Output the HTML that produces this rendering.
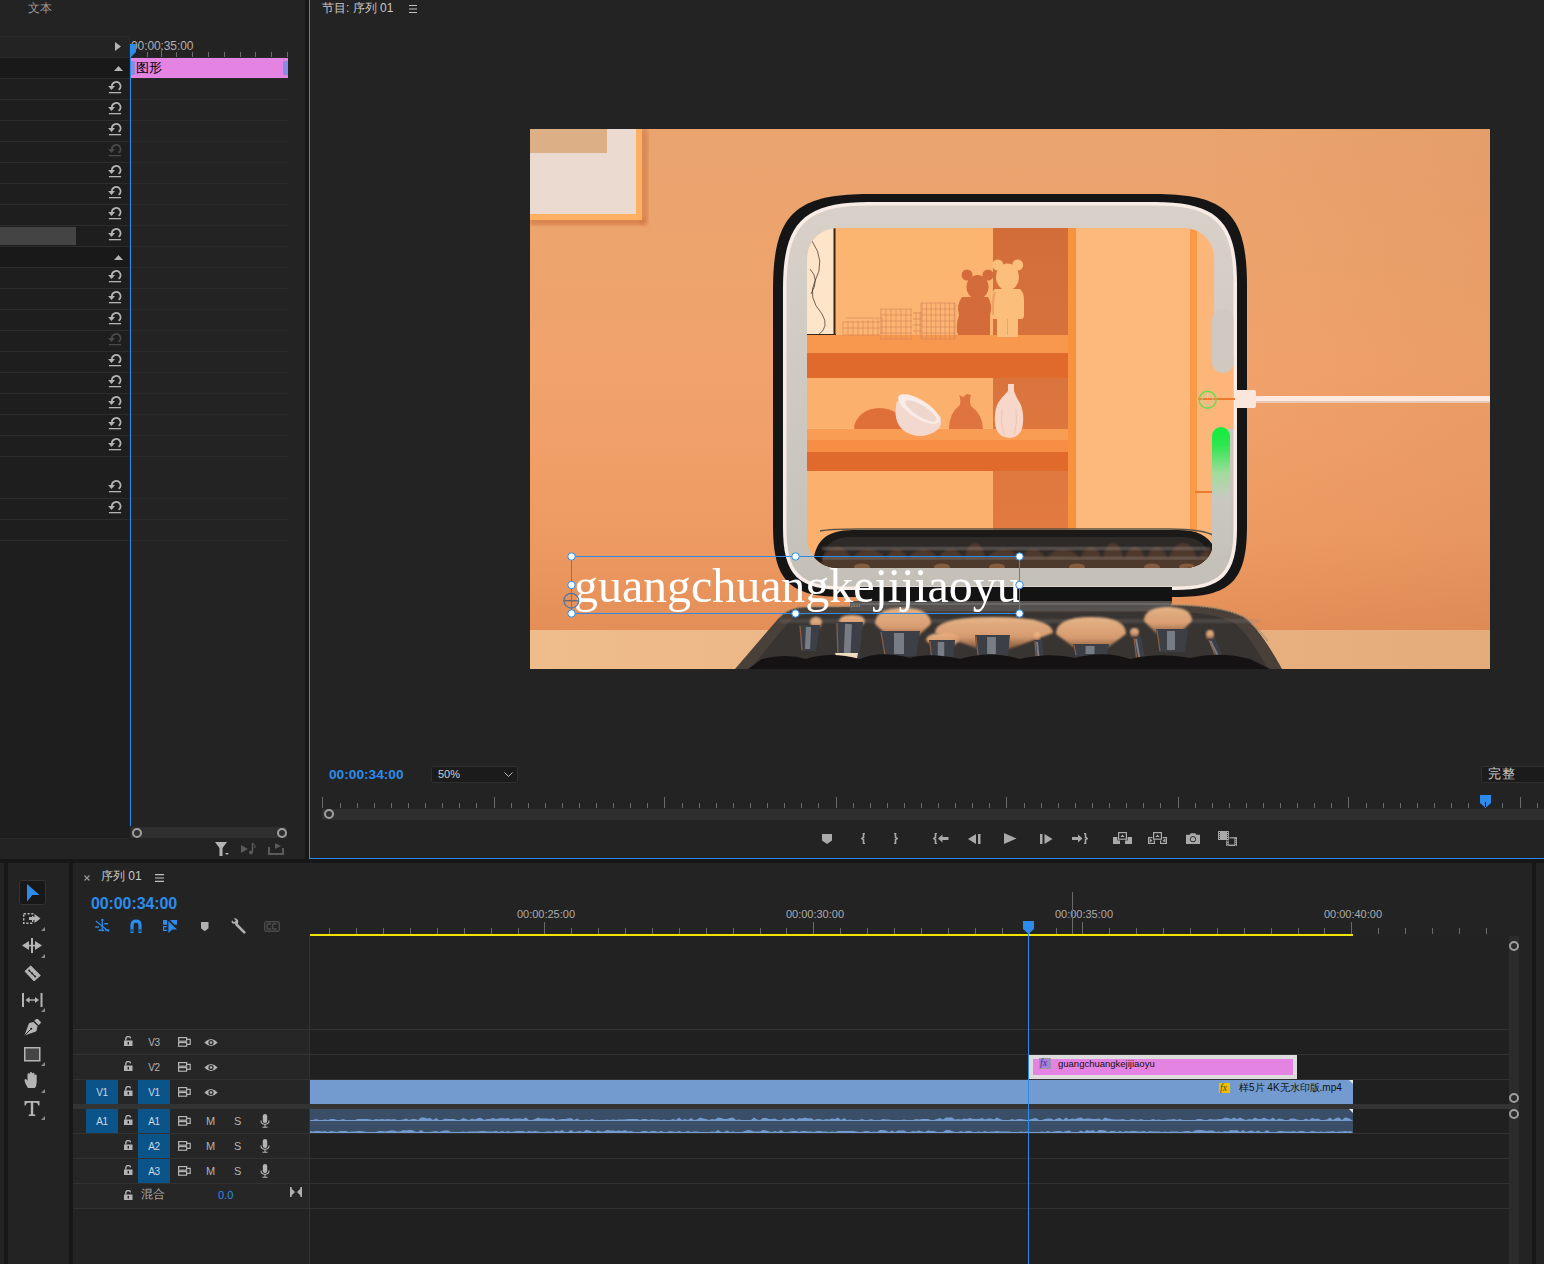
<!DOCTYPE html>
<html><head><meta charset="utf-8">
<style>
*{margin:0;padding:0;box-sizing:border-box}
html,body{width:1544px;height:1264px;overflow:hidden;background:#171717;font-family:"Liberation Sans",sans-serif;color:#b4b4b4}
.a{position:absolute}
.t{position:absolute;white-space:nowrap;line-height:1}
.hl{position:absolute;height:1px;background:#2c2c2c}
.vl{position:absolute;width:1px}
</style></head><body>

<div class="a" style="left:0;top:0;width:305px;height:859px;background:#232323"></div>
<div class="t" style="left:28px;top:2px;font-size:12px;color:#9a9a9a">文本</div>
<div class="a" style="left:0;top:57px;width:129px;height:781px;background:#1e1e1e"></div>
<div class="a" style="left:0;top:57px;width:129px;height:21px;background:#191919"></div>
<div class="a" style="left:0;top:246px;width:129px;height:21px;background:#191919"></div>
<div class="a" style="left:0;top:227px;width:76px;height:18px;background:#444"></div>
<div class="hl" style="left:0;top:36px;width:129px"></div>
<div class="hl" style="left:0;top:57px;width:129px"></div>
<div class="hl" style="left:131px;top:57px;width:157px;background:#2a2a2a"></div>
<div class="hl" style="left:0;top:78px;width:129px"></div>
<div class="hl" style="left:131px;top:78px;width:157px;background:#2a2a2a"></div>
<div class="hl" style="left:0;top:99px;width:129px"></div>
<div class="hl" style="left:131px;top:99px;width:157px;background:#2a2a2a"></div>
<div class="hl" style="left:0;top:120px;width:129px"></div>
<div class="hl" style="left:131px;top:120px;width:157px;background:#2a2a2a"></div>
<div class="hl" style="left:0;top:141px;width:129px"></div>
<div class="hl" style="left:131px;top:141px;width:157px;background:#2a2a2a"></div>
<div class="hl" style="left:0;top:162px;width:129px"></div>
<div class="hl" style="left:131px;top:162px;width:157px;background:#2a2a2a"></div>
<div class="hl" style="left:0;top:183px;width:129px"></div>
<div class="hl" style="left:131px;top:183px;width:157px;background:#2a2a2a"></div>
<div class="hl" style="left:0;top:204px;width:129px"></div>
<div class="hl" style="left:131px;top:204px;width:157px;background:#2a2a2a"></div>
<div class="hl" style="left:0;top:225px;width:129px"></div>
<div class="hl" style="left:131px;top:225px;width:157px;background:#2a2a2a"></div>
<div class="hl" style="left:0;top:246px;width:129px"></div>
<div class="hl" style="left:131px;top:246px;width:157px;background:#2a2a2a"></div>
<div class="hl" style="left:0;top:267px;width:129px"></div>
<div class="hl" style="left:131px;top:267px;width:157px;background:#2a2a2a"></div>
<div class="hl" style="left:0;top:288px;width:129px"></div>
<div class="hl" style="left:131px;top:288px;width:157px;background:#2a2a2a"></div>
<div class="hl" style="left:0;top:309px;width:129px"></div>
<div class="hl" style="left:131px;top:309px;width:157px;background:#2a2a2a"></div>
<div class="hl" style="left:0;top:330px;width:129px"></div>
<div class="hl" style="left:131px;top:330px;width:157px;background:#2a2a2a"></div>
<div class="hl" style="left:0;top:351px;width:129px"></div>
<div class="hl" style="left:131px;top:351px;width:157px;background:#2a2a2a"></div>
<div class="hl" style="left:0;top:372px;width:129px"></div>
<div class="hl" style="left:131px;top:372px;width:157px;background:#2a2a2a"></div>
<div class="hl" style="left:0;top:393px;width:129px"></div>
<div class="hl" style="left:131px;top:393px;width:157px;background:#2a2a2a"></div>
<div class="hl" style="left:0;top:414px;width:129px"></div>
<div class="hl" style="left:131px;top:414px;width:157px;background:#2a2a2a"></div>
<div class="hl" style="left:0;top:435px;width:129px"></div>
<div class="hl" style="left:131px;top:435px;width:157px;background:#2a2a2a"></div>
<div class="hl" style="left:0;top:456px;width:129px"></div>
<div class="hl" style="left:131px;top:456px;width:157px;background:#2a2a2a"></div>
<div class="hl" style="left:0;top:498px;width:129px"></div>
<div class="hl" style="left:131px;top:498px;width:157px;background:#2a2a2a"></div>
<div class="hl" style="left:0;top:519px;width:129px"></div>
<div class="hl" style="left:131px;top:519px;width:157px;background:#2a2a2a"></div>
<div class="hl" style="left:0;top:540px;width:129px"></div>
<div class="hl" style="left:131px;top:540px;width:157px;background:#2a2a2a"></div>
<svg class="a" style="left:108px;top:81px" width="14" height="13" viewBox="0 0 14 13"><path d="M3.9 5.6A4.3 4.3 0 1 1 10.6 8.8" stroke="#b4b4b4" stroke-width="1.7" fill="none"/><path d="M0.1 5.1H7L3.5 9Z" fill="#b4b4b4"/><rect x="0.9" y="11" width="12.2" height="1.3" fill="#b4b4b4"/></svg>
<svg class="a" style="left:108px;top:102px" width="14" height="13" viewBox="0 0 14 13"><path d="M3.9 5.6A4.3 4.3 0 1 1 10.6 8.8" stroke="#b4b4b4" stroke-width="1.7" fill="none"/><path d="M0.1 5.1H7L3.5 9Z" fill="#b4b4b4"/><rect x="0.9" y="11" width="12.2" height="1.3" fill="#b4b4b4"/></svg>
<svg class="a" style="left:108px;top:123px" width="14" height="13" viewBox="0 0 14 13"><path d="M3.9 5.6A4.3 4.3 0 1 1 10.6 8.8" stroke="#b4b4b4" stroke-width="1.7" fill="none"/><path d="M0.1 5.1H7L3.5 9Z" fill="#b4b4b4"/><rect x="0.9" y="11" width="12.2" height="1.3" fill="#b4b4b4"/></svg>
<svg class="a" style="left:108px;top:144px" width="14" height="13" viewBox="0 0 14 13"><path d="M3.9 5.6A4.3 4.3 0 1 1 10.6 8.8" stroke="#4a4a4a" stroke-width="1.7" fill="none"/><path d="M0.1 5.1H7L3.5 9Z" fill="#4a4a4a"/><rect x="0.9" y="11" width="12.2" height="1.3" fill="#4a4a4a"/></svg>
<svg class="a" style="left:108px;top:165px" width="14" height="13" viewBox="0 0 14 13"><path d="M3.9 5.6A4.3 4.3 0 1 1 10.6 8.8" stroke="#b4b4b4" stroke-width="1.7" fill="none"/><path d="M0.1 5.1H7L3.5 9Z" fill="#b4b4b4"/><rect x="0.9" y="11" width="12.2" height="1.3" fill="#b4b4b4"/></svg>
<svg class="a" style="left:108px;top:186px" width="14" height="13" viewBox="0 0 14 13"><path d="M3.9 5.6A4.3 4.3 0 1 1 10.6 8.8" stroke="#b4b4b4" stroke-width="1.7" fill="none"/><path d="M0.1 5.1H7L3.5 9Z" fill="#b4b4b4"/><rect x="0.9" y="11" width="12.2" height="1.3" fill="#b4b4b4"/></svg>
<svg class="a" style="left:108px;top:207px" width="14" height="13" viewBox="0 0 14 13"><path d="M3.9 5.6A4.3 4.3 0 1 1 10.6 8.8" stroke="#b4b4b4" stroke-width="1.7" fill="none"/><path d="M0.1 5.1H7L3.5 9Z" fill="#b4b4b4"/><rect x="0.9" y="11" width="12.2" height="1.3" fill="#b4b4b4"/></svg>
<svg class="a" style="left:108px;top:228px" width="14" height="13" viewBox="0 0 14 13"><path d="M3.9 5.6A4.3 4.3 0 1 1 10.6 8.8" stroke="#b4b4b4" stroke-width="1.7" fill="none"/><path d="M0.1 5.1H7L3.5 9Z" fill="#b4b4b4"/><rect x="0.9" y="11" width="12.2" height="1.3" fill="#b4b4b4"/></svg>
<svg class="a" style="left:108px;top:270px" width="14" height="13" viewBox="0 0 14 13"><path d="M3.9 5.6A4.3 4.3 0 1 1 10.6 8.8" stroke="#b4b4b4" stroke-width="1.7" fill="none"/><path d="M0.1 5.1H7L3.5 9Z" fill="#b4b4b4"/><rect x="0.9" y="11" width="12.2" height="1.3" fill="#b4b4b4"/></svg>
<svg class="a" style="left:108px;top:291px" width="14" height="13" viewBox="0 0 14 13"><path d="M3.9 5.6A4.3 4.3 0 1 1 10.6 8.8" stroke="#b4b4b4" stroke-width="1.7" fill="none"/><path d="M0.1 5.1H7L3.5 9Z" fill="#b4b4b4"/><rect x="0.9" y="11" width="12.2" height="1.3" fill="#b4b4b4"/></svg>
<svg class="a" style="left:108px;top:312px" width="14" height="13" viewBox="0 0 14 13"><path d="M3.9 5.6A4.3 4.3 0 1 1 10.6 8.8" stroke="#b4b4b4" stroke-width="1.7" fill="none"/><path d="M0.1 5.1H7L3.5 9Z" fill="#b4b4b4"/><rect x="0.9" y="11" width="12.2" height="1.3" fill="#b4b4b4"/></svg>
<svg class="a" style="left:108px;top:333px" width="14" height="13" viewBox="0 0 14 13"><path d="M3.9 5.6A4.3 4.3 0 1 1 10.6 8.8" stroke="#4a4a4a" stroke-width="1.7" fill="none"/><path d="M0.1 5.1H7L3.5 9Z" fill="#4a4a4a"/><rect x="0.9" y="11" width="12.2" height="1.3" fill="#4a4a4a"/></svg>
<svg class="a" style="left:108px;top:354px" width="14" height="13" viewBox="0 0 14 13"><path d="M3.9 5.6A4.3 4.3 0 1 1 10.6 8.8" stroke="#b4b4b4" stroke-width="1.7" fill="none"/><path d="M0.1 5.1H7L3.5 9Z" fill="#b4b4b4"/><rect x="0.9" y="11" width="12.2" height="1.3" fill="#b4b4b4"/></svg>
<svg class="a" style="left:108px;top:375px" width="14" height="13" viewBox="0 0 14 13"><path d="M3.9 5.6A4.3 4.3 0 1 1 10.6 8.8" stroke="#b4b4b4" stroke-width="1.7" fill="none"/><path d="M0.1 5.1H7L3.5 9Z" fill="#b4b4b4"/><rect x="0.9" y="11" width="12.2" height="1.3" fill="#b4b4b4"/></svg>
<svg class="a" style="left:108px;top:396px" width="14" height="13" viewBox="0 0 14 13"><path d="M3.9 5.6A4.3 4.3 0 1 1 10.6 8.8" stroke="#b4b4b4" stroke-width="1.7" fill="none"/><path d="M0.1 5.1H7L3.5 9Z" fill="#b4b4b4"/><rect x="0.9" y="11" width="12.2" height="1.3" fill="#b4b4b4"/></svg>
<svg class="a" style="left:108px;top:417px" width="14" height="13" viewBox="0 0 14 13"><path d="M3.9 5.6A4.3 4.3 0 1 1 10.6 8.8" stroke="#b4b4b4" stroke-width="1.7" fill="none"/><path d="M0.1 5.1H7L3.5 9Z" fill="#b4b4b4"/><rect x="0.9" y="11" width="12.2" height="1.3" fill="#b4b4b4"/></svg>
<svg class="a" style="left:108px;top:438px" width="14" height="13" viewBox="0 0 14 13"><path d="M3.9 5.6A4.3 4.3 0 1 1 10.6 8.8" stroke="#b4b4b4" stroke-width="1.7" fill="none"/><path d="M0.1 5.1H7L3.5 9Z" fill="#b4b4b4"/><rect x="0.9" y="11" width="12.2" height="1.3" fill="#b4b4b4"/></svg>
<svg class="a" style="left:108px;top:480px" width="14" height="13" viewBox="0 0 14 13"><path d="M3.9 5.6A4.3 4.3 0 1 1 10.6 8.8" stroke="#b4b4b4" stroke-width="1.7" fill="none"/><path d="M0.1 5.1H7L3.5 9Z" fill="#b4b4b4"/><rect x="0.9" y="11" width="12.2" height="1.3" fill="#b4b4b4"/></svg>
<svg class="a" style="left:108px;top:501px" width="14" height="13" viewBox="0 0 14 13"><path d="M3.9 5.6A4.3 4.3 0 1 1 10.6 8.8" stroke="#b4b4b4" stroke-width="1.7" fill="none"/><path d="M0.1 5.1H7L3.5 9Z" fill="#b4b4b4"/><rect x="0.9" y="11" width="12.2" height="1.3" fill="#b4b4b4"/></svg>
<div class="vl" style="left:129px;top:36px;height:21px;background:#2c2c2c"></div>
<svg class="a" style="left:115px;top:42px" width="6" height="9"><path d="M0 0L6 4.5L0 9Z" fill="#b4b4b4"/></svg>
<svg class="a" style="left:114px;top:66px" width="9" height="5"><path d="M0 5L4.5 0L9 5Z" fill="#b4b4b4"/></svg>
<svg class="a" style="left:114px;top:255px" width="9" height="5"><path d="M0 5L4.5 0L9 5Z" fill="#b4b4b4"/></svg>
<div class="t" style="left:131px;top:40px;font-size:12px;color:#b0b0b0;letter-spacing:-0.1px">00:00:35:00</div>
<div class="vl" style="left:147px;top:52px;height:5px;background:#6e6e6e"></div>
<div class="vl" style="left:161px;top:48px;height:9px;background:#6e6e6e"></div>
<div class="vl" style="left:176px;top:52px;height:5px;background:#6e6e6e"></div>
<div class="vl" style="left:192px;top:52px;height:5px;background:#6e6e6e"></div>
<div class="vl" style="left:208px;top:52px;height:5px;background:#6e6e6e"></div>
<div class="vl" style="left:224px;top:52px;height:5px;background:#6e6e6e"></div>
<div class="vl" style="left:240px;top:52px;height:5px;background:#6e6e6e"></div>
<div class="vl" style="left:255px;top:52px;height:5px;background:#6e6e6e"></div>
<div class="vl" style="left:271px;top:52px;height:5px;background:#6e6e6e"></div>
<div class="vl" style="left:287px;top:52px;height:5px;background:#6e6e6e"></div>
<div class="a" style="left:131px;top:58px;width:157px;height:20px;background:#e483e2"></div>
<div class="a" style="left:131px;top:61px;width:4px;height:14px;background:#8a8be6"></div>
<div class="a" style="left:283px;top:61px;width:5px;height:14px;background:#8a8be6"></div>
<div class="t" style="left:136px;top:61px;font-size:13px;color:#000">图形</div>
<div class="vl" style="left:130px;top:44px;height:782px;background:#2d8ceb"></div>
<svg class="a" style="left:130px;top:44px" width="7" height="13"><path d="M0 0H6V8L1 13H0Z" fill="#2d8ceb"/></svg>
<div class="hl" style="left:0;top:838px;width:129px;background:#2a2a2a"></div>
<div class="a" style="left:131px;top:827px;width:156px;height:11px;background:#2f2f2f"></div>
<div class="a" style="left:132px;top:828px;width:10px;height:10px;border:2px solid #a0a0a0;border-radius:50%"></div>
<div class="a" style="left:277px;top:828px;width:10px;height:10px;border:2px solid #a0a0a0;border-radius:50%"></div>
<svg class="a" style="left:215px;top:842px" width="16" height="15"><path d="M0 0H12L7.5 6V14H4.5V6Z" fill="#b4b4b4"/><path d="M10 11H14L12 13Z" fill="#b4b4b4"/></svg>
<svg class="a" style="left:241px;top:843px" width="16" height="12"><path d="M0 2L7 6L0 10Z" fill="#5a5a5a"/><path d="M11.5 0V9" stroke="#5a5a5a" stroke-width="1.5"/><circle cx="10" cy="9.5" r="2" fill="#5a5a5a"/><path d="M11.5 0Q15 2 14 5" stroke="#5a5a5a" fill="none"/></svg>
<svg class="a" style="left:268px;top:843px" width="16" height="12"><path d="M1 4V11H15V5" stroke="#5a5a5a" stroke-width="2" fill="none"/><path d="M7 0L13 3L7 6Z" fill="#5a5a5a"/></svg>
<div class="a" style="left:309px;top:0;width:1235px;height:859px;background:#232323;border-left:1px solid #2d8ceb;border-bottom:1px solid #2d8ceb"></div>
<div class="t" style="left:322px;top:2px;font-size:12px;color:#c8c8c8">节目: 序列 01</div>
<svg class="a" style="left:409px;top:5px" width="8" height="8"><path d="M0 .5H8M0 4H8M0 7.5H8" stroke="#c0c0c0" stroke-width="1"/></svg>
<svg class="a" style="left:530px;top:129px" width="960" height="540" viewBox="0 0 960 540">
<defs>
<linearGradient id="wall" x1="0" y1="0" x2="0" y2="1">
 <stop offset="0" stop-color="#e9a46f"/><stop offset="0.45" stop-color="#f1a36b"/><stop offset="0.75" stop-color="#ee9b63"/><stop offset="0.93" stop-color="#e38e57"/>
</linearGradient>
<linearGradient id="wallr" x1="0" y1="0" x2="1" y2="0">
 <stop offset="0" stop-color="#c06030" stop-opacity="0.0"/><stop offset="0.7" stop-color="#c06030" stop-opacity="0"/><stop offset="1" stop-color="#b06a40" stop-opacity="0.10"/>
</linearGradient>
<linearGradient id="floor" x1="0" y1="0" x2="1" y2="0">
 <stop offset="0" stop-color="#efbc8b"/><stop offset="1" stop-color="#e4ac7a"/>
</linearGradient>
<linearGradient id="green" x1="0" y1="0" x2="0" y2="1">
 <stop offset="0" stop-color="#10ee3a"/><stop offset="0.14" stop-color="#2ee650"/><stop offset="0.36" stop-color="#a4dc9c"/><stop offset="0.55" stop-color="#c8c8c0"/><stop offset="1" stop-color="#c6c2ba"/>
</linearGradient>
<linearGradient id="darkp" x1="0" y1="0" x2="0" y2="1">
 <stop offset="0" stop-color="#d26d3a"/><stop offset="1" stop-color="#e47c42"/>
</linearGradient>
<linearGradient id="ring" x1="0" y1="0" x2="0" y2="1">
 <stop offset="0" stop-color="#d9d1c9"/><stop offset="1" stop-color="#c4c0b8"/>
</linearGradient>
<linearGradient id="scene" x1="0" y1="0" x2="0" y2="1">
 <stop offset="0" stop-color="#fcb471"/><stop offset="1" stop-color="#fdb676"/>
</linearGradient>
<clipPath id="inner"><path d="M309 99H652C671.2 99 684 111.8 684 131V409C684 427.0 672.0 439 654 439H309C289.8 439 277 426.2 277 407V131C277 111.8 289.8 99 309 99Z"/></clipPath>
<linearGradient id="fan" x1="0" y1="0" x2="0" y2="1"><stop offset="0" stop-color="#f6c08e"/><stop offset="0.6" stop-color="#e9a878"/><stop offset="1" stop-color="#8a5a3a"/></linearGradient>
<filter id="thin" x="-5%" y="-20%" width="110%" height="140%"><feMorphology operator="erode" radius="0.45"/></filter>
<filter id="blur1"><feGaussianBlur stdDeviation="1.2"/></filter>
<filter id="blur2"><feGaussianBlur stdDeviation="2"/></filter>
<filter id="blur3"><feGaussianBlur stdDeviation="3"/></filter>
</defs>
<rect width="960" height="540" fill="url(#wall)"/>
<rect width="960" height="501" fill="url(#wallr)"/>
<rect y="501" width="960" height="39" fill="url(#floor)"/>
<rect x="0" y="89" width="114" height="7" fill="#c86632" opacity="0.55" filter="url(#blur2)"/>
<rect x="110" y="0" width="8" height="95" fill="#c86632" opacity="0.45" filter="url(#blur2)"/>
<rect x="0" y="0" width="112" height="91" fill="#fdb063"/>
<rect x="0" y="0" width="106" height="85" fill="#eadacf"/>
<rect x="0" y="0" width="77" height="24" fill="#dcaf87"/>
<path d="M339 65H625C696.76 65 717 85.24 717 157V396C717 452.16 701.16 468 645 468H315C258.84 468 243 452.16 243 396V161C243 86.12 264.12 65 339 65Z" fill="#151515"/>
<path d="M339 73H625C687.32 73 707 92.68 707 155V399C707 446.12 692.12 461 645 461H315C267.88 461 253 446.12 253 399V159C253 93.64 273.64 73 339 73Z" fill="#f8ece6"/>
<path d="M338.5 76.5H625.5C684.78 76.5 703.5 95.22 703.5 154.5V399.5C703.5 443.58 689.58 457.5 645.5 457.5H314.5C270.42 457.5 256.5 443.58 256.5 399.5V158.5C256.5 96.18 276.18 76.5 338.5 76.5Z" fill="url(#ring)"/>
<g clip-path="url(#inner)">
<rect x="270" y="95" width="420" height="350" fill="url(#scene)"/>
<rect x="276" y="99" width="28" height="107" fill="#fde5c9"/>
<path d="M282 112Q296 132 285 152Q277 168 292 185Q300 198 288 206M280 140Q290 150 281 165" stroke="#3a2a20" stroke-width="0.7" fill="none"/>
<rect x="303.5" y="99" width="2" height="108" fill="#3a2418"/>
<rect x="276" y="205" width="30" height="2" fill="#3a2418"/>
<rect x="463" y="99" width="75" height="340" fill="url(#darkp)"/>
<rect x="538" y="99" width="8" height="340" fill="#f7933f"/>
<rect x="546" y="99" width="138" height="340" fill="#fdb87b"/>
<rect x="660" y="99" width="7" height="340" fill="#fa9947"/>
<rect x="667" y="99" width="17" height="340" fill="#fdb67a"/>
<rect x="270" y="206" width="268" height="18" fill="#f8974e"/>
<rect x="270" y="224" width="268" height="25" fill="#e06a2b"/>
<rect x="270" y="249" width="193" height="50" fill="#fcb06d"/>
<rect x="270" y="300" width="268" height="11" fill="#f99d55"/>
<rect x="270" y="311" width="268" height="12" fill="#f68e45"/>
<rect x="270" y="323" width="268" height="19" fill="#e06a2b"/>
<rect x="270" y="342" width="193" height="100" fill="#fcb06d"/>
<g stroke="#d8875a" stroke-width="0.7" fill="none" opacity="0.95">
<path d="M313 193.0V207"/>
<path d="M318 192.6V207"/>
<path d="M323 192.2V207"/>
<path d="M328 191.8V207"/>
<path d="M333 191.4V207"/>
<path d="M338 191.0V207"/>
<path d="M343 190.6V207"/>
<path d="M348 190.2V207"/>
<path d="M313 193H350M313 199H350M313 206H350M316 189H352M352 189V205"/>
<path d="M351 180V210"/>
<path d="M356 180V210"/>
<path d="M361 180V210"/>
<path d="M366 180V210"/>
<path d="M371 180V210"/>
<path d="M376 180V210"/>
<path d="M381 180V210"/>
<path d="M350 180H382M350 186H382M350 192H382M350 198H382M350 204H382M350 210H382"/>
<path d="M383 184H392M383 190H392M383 196H392M383 202H392M386 183V206M390 183V206"/>
<path d="M392.0 174V210"/>
<path d="M396.6 174V210"/>
<path d="M401.2 174V210"/>
<path d="M405.8 174V210"/>
<path d="M410.4 174V210"/>
<path d="M415.0 174V210"/>
<path d="M419.6 174V210"/>
<path d="M424.2 174V210"/>
<path d="M391 174H425M391 180H425M391 186H425M391 192H425M391 198H425M391 204H425M391 210H425M391 174V210M425 174V210"/>
</g>
<g fill="#d46b3a"><circle cx="437" cy="146" r="5.5"/><circle cx="458" cy="146" r="5.5"/><ellipse cx="447.5" cy="158" rx="11" ry="12"/><path d="M432 168Q426 176 429 186Q425 198 428 206H460V186Q463 176 458 168Z"/></g>
<g fill="#fbbe7b"><circle cx="467.8" cy="136" r="5.5"/><circle cx="487.7" cy="136" r="5.5"/><ellipse cx="477.5" cy="148" rx="11.5" ry="13.5"/><path d="M465 160Q461 163 461 172V186Q461 190 464 190H467V208H488V190H491Q494 190 494 186V172Q494 163 490 160Z"/></g>
<path d="M465 163Q462 170 463 186" stroke="#eea466" stroke-width="2.5" fill="none"/>
<path d="M477.5 190V206" stroke="#e8a060" stroke-width="0.8"/>
<path d="M324 300A25.5 21 0 0 1 375 300Z" fill="#df703a"/>
<path d="M367 272Q362 292 374 302Q390 312 406 302Q414 296 410 287Z" fill="#f3d8cf"/>
<ellipse cx="389" cy="280" rx="24" ry="9" transform="rotate(32 389 280)" fill="#f9ebe5"/>
<ellipse cx="391" cy="282" rx="18" ry="5.5" transform="rotate(32 391 282)" fill="#eed6cc"/>
<path d="M419 300Q419 284 430 276Q431 270 429 266L433 268L437 265L441 266Q439 272 441 277Q453 286 453 300Z" fill="#df7440"/>
<path d="M478 255H484V262Q486 268 490 274Q494 282 493 294Q492 308 480 309Q466 308 465 294Q464 282 468 274Q472 268 478 262Z" fill="#f7d7ca"/>
<path d="M472 280Q470 294 474 306M486 280Q488 294 484 306" stroke="#e8c0b0" stroke-width="0.8" fill="none"/>
<path d="M323 401H648C676.0 401 688 413.0 688 441V439C688 446.0 685.0 449 678 449H293C286.0 449 283 446.0 283 439V441C283 413.0 295.0 401 323 401Z" fill="#1c1a19"/>
<path d="M322 408H650C671.0 408 680 417.0 680 438V440C680 445.6 677.6 448 672 448H300C294.4 448 292 445.6 292 440V438C292 417.0 301.0 408 322 408Z" fill="#2e2a28"/>
<path d="M292 430Q298 418 307 418Q316 418 322 430Q329 420 339 420Q349 420 356 430Q360 420 367 420Q374 420 378 430Q384 420 393 420Q402 420 408 430Q413 420 421 420Q429 420 434 430Q438 414 445 414Q452 414 456 430Q463 420 473 420Q483 420 490 430Q495 420 503 420Q511 420 516 430Q523 420 533 420Q543 420 550 430Q554 418 561 418Q568 418 572 430Q576 414 583 414Q590 414 594 430Q598 418 605 418Q612 418 616 430Q620 418 627 418Q634 418 638 430Q644 414 653 414Q662 414 668 430Q673 420 681 420Q689 420 694 430V446H292Z" fill="#6a4530" opacity="0.55" filter="url(#blur1)"/>
<rect x="292" y="418" width="388" height="3" fill="#d0c8c0" opacity="0.28" filter="url(#blur1)"/>
<rect x="292" y="428" width="388" height="2.5" fill="#c8c0b8" opacity="0.3" filter="url(#blur1)"/>
<ellipse cx="332" cy="438" rx="8" ry="3.5" fill="#b07848" opacity="0.55"/>
<ellipse cx="412" cy="438" rx="8" ry="3.5" fill="#b07848" opacity="0.55"/>
<ellipse cx="467" cy="438" rx="8" ry="3.5" fill="#b07848" opacity="0.55"/>
<ellipse cx="547" cy="438" rx="8" ry="3.5" fill="#b07848" opacity="0.55"/>
<ellipse cx="622" cy="438" rx="8" ry="3.5" fill="#b07848" opacity="0.55"/>
<ellipse cx="657" cy="438" rx="8" ry="3.5" fill="#b07848" opacity="0.55"/>
<path d="M290 402Q300 400 330 400H640Q680 400 688 410" stroke="#5a5448" stroke-width="1.5" fill="none"/>
</g>
<rect x="682" y="226" width="21.5" height="74" fill="#fdb57a"/>
<rect x="682" y="180" width="21.5" height="64" rx="10.75" fill="#cfc9c1"/>
<rect x="660" y="244" width="7" height="56" fill="#fa9947" opacity="0"/>
<rect x="668" y="269" width="37" height="2" fill="#ef7a2e"/>
<circle cx="677.6" cy="270.7" r="8.5" stroke="#5ce052" stroke-width="1.4" fill="none"/><circle cx="677.6" cy="270.7" r="5.5" stroke="#b8d8a0" stroke-width="1" fill="none"/><path d="M677.6 264V270" stroke="#d0d8c0" stroke-width="1"/>
<rect x="665" y="362" width="17" height="2" fill="#ef7a2e"/>
<rect x="682" y="298" width="18" height="130" rx="9" fill="url(#green)"/>
<rect x="705" y="261" width="21" height="18" rx="2" fill="#fbe6dc"/>
<rect x="726" y="267" width="234" height="7" fill="#fde9df"/>
<rect x="726" y="272" width="234" height="2" fill="#e8c8b8"/>
<rect x="330" y="458" width="312" height="20" fill="#131313"/>
<path d="M205 540L248 490Q258 478 275 478L641 476Q690 476 714 488Q730 500 752 540Z" fill="#4a403a"/>
<path d="M220 540L258 494Q266 485 282 485L638 483Q684 483 704 494Q718 504 738 540Z" fill="#383432"/>
<rect x="320" y="472" width="322" height="10" fill="#55514f"/>
<rect x="320" y="474" width="322" height="2" fill="#7a7674" opacity="0.6"/>
<path d="M250 488Q258 479 275 478L330 477M641 476Q690 476 714 488Q726 497 738 512" stroke="#9a8a70" stroke-width="2" stroke-dasharray="0.8 0.8" fill="none"/>
<rect x="250" y="490" width="480" height="4" fill="#8a8480" opacity="0.25" filter="url(#blur1)"/>
<path d="M283.0 500L280.0 494.0Q280.0 488 286 488Q292.0 488 292.0 494.0L289.0 500Z" fill="url(#fan)" opacity="0.9" filter="url(#blur1)"/>
<path d="M315.0 500L309.0 493.0Q309.0 486 322 486Q335.0 486 335.0 493.0L329.0 500Z" fill="url(#fan)" opacity="0.9" filter="url(#blur1)"/>
<path d="M362.0 511L345.0 495.0Q345.0 479 373 479Q401.0 479 401.0 495.0L384.0 511Z" fill="url(#fan)" opacity="0.9" filter="url(#blur1)"/>
<path d="M405.0 519L396.0 511.5Q396.0 504 413 504Q430.0 504 430.0 511.5L421.0 519Z" fill="url(#fan)" opacity="0.9" filter="url(#blur1)"/>
<path d="M449.0 520L405.0 504.0Q405.0 488 464 488Q523.0 488 523.0 504.0L479.0 520Z" fill="url(#fan)" opacity="0.9" filter="url(#blur1)"/>
<path d="M504.5 512L504.0 507.5Q504.0 503 507 503Q510.0 503 510.0 507.5L509.5 512Z" fill="url(#fan)" opacity="0.9" filter="url(#blur1)"/>
<path d="M549.0 522L526.0 505.0Q526.0 488 561 488Q596.0 488 596.0 505.0L573.0 522Z" fill="url(#fan)" opacity="0.9" filter="url(#blur1)"/>
<path d="M601.5 508L600.0 503.5Q600.0 499 604.5 499Q609.0 499 609.0 503.5L607.5 508Z" fill="url(#fan)" opacity="0.9" filter="url(#blur1)"/>
<path d="M628.0 506L614.0 492.0Q614.0 478 638 478Q662.0 478 662.0 492.0L648.0 506Z" fill="url(#fan)" opacity="0.9" filter="url(#blur1)"/>
<path d="M677.0 510L676.0 505.5Q676.0 501 680 501Q684.0 501 684.0 505.5L683.0 510Z" fill="url(#fan)" opacity="0.9" filter="url(#blur1)"/>
<path d="M269 496L290 496L286 522L271 522Z" fill="#3c3f46"/>
<path d="M278.5 498L277.5 520" stroke="#9096a0" stroke-width="5.2" opacity="0.7"/>
<path d="M270 497L272 521" stroke="#b06a3a" stroke-width="1.2" opacity="0.7"/>
<path d="M306 493L333 493L329 530L307 530Z" fill="#3c3f46"/>
<path d="M318.5 495L317.0 528" stroke="#9096a0" stroke-width="6.8" opacity="0.7"/>
<path d="M307 494L308 529" stroke="#b06a3a" stroke-width="1.2" opacity="0.7"/>
<path d="M350 502L390 502L386 527L354 527Z" fill="#3c3f46"/>
<path d="M369.0 504L369.0 525" stroke="#9096a0" stroke-width="10.0" opacity="0.7"/>
<path d="M351 503L355 526" stroke="#b06a3a" stroke-width="1.2" opacity="0.7"/>
<path d="M399 511L425 511L423 534L401 534Z" fill="#3c3f46"/>
<path d="M411.0 513L411.0 532" stroke="#9096a0" stroke-width="6.5" opacity="0.7"/>
<path d="M400 512L402 533" stroke="#b06a3a" stroke-width="1.2" opacity="0.7"/>
<path d="M445 506L480 506L478 527L447 527Z" fill="#3c3f46"/>
<path d="M461.5 508L461.5 525" stroke="#9096a0" stroke-width="8.8" opacity="0.7"/>
<path d="M446 507L448 526" stroke="#b06a3a" stroke-width="1.2" opacity="0.7"/>
<path d="M504 511L512 511L515 540L506 540Z" fill="#3c3f46"/>
<path d="M507.0 513L509.5 538" stroke="#9096a0" stroke-width="2.0" opacity="0.7"/>
<path d="M505 512L507 539" stroke="#b06a3a" stroke-width="1.2" opacity="0.7"/>
<path d="M543 515L579 515L577 527L545 527Z" fill="#3c3f46"/>
<path d="M560.0 517L560.0 525" stroke="#9096a0" stroke-width="9.0" opacity="0.7"/>
<path d="M544 516L546 526" stroke="#b06a3a" stroke-width="1.2" opacity="0.7"/>
<path d="M603 508L611 508L617 540L607 540Z" fill="#3c3f46"/>
<path d="M606.0 510L611.0 538" stroke="#9096a0" stroke-width="2.0" opacity="0.7"/>
<path d="M604 509L608 539" stroke="#b06a3a" stroke-width="1.2" opacity="0.7"/>
<path d="M626 500L658 500L655 523L629 523Z" fill="#3c3f46"/>
<path d="M641.0 502L641.0 521" stroke="#9096a0" stroke-width="8.0" opacity="0.7"/>
<path d="M627 501L630 522" stroke="#b06a3a" stroke-width="1.2" opacity="0.7"/>
<path d="M678 510L685 510L697 536L688 536Z" fill="#3c3f46"/>
<path d="M680.5 512L691.5 534" stroke="#9096a0" stroke-width="1.8" opacity="0.7"/>
<path d="M679 511L689 535" stroke="#b06a3a" stroke-width="1.2" opacity="0.7"/>
<path d="M305 524H328L326 535H309Z" fill="#f0dcc0"/>
<path d="M218 540L232 530Q256 524 276 530Q300 522 330 530Q350 521 380 529Q400 523 430 530Q460 521 490 530Q520 523 545 529Q575 521 600 530Q630 523 660 529Q690 522 720 530L740 540Z" fill="#141212"/>
<text x="44" y="472.7" font-family="Liberation Serif" font-size="48" letter-spacing="-0.06" fill="#ffffff" filter="url(#thin)">guangchuangkejijiaoyu</text>
<rect x="41.5" y="427.5" width="448" height="57" stroke="#2d8ceb" stroke-width="1" fill="none"/>
<circle cx="41.3" cy="471.7" r="7.4" stroke="#4a78b0" stroke-width="1.2" fill="none"/>
<path d="M33.5 471.7H47.5" stroke="#6b6b6b" stroke-width="1.5"/>
<circle cx="41.5" cy="427.5" r="3.7" fill="#fff" stroke="#2d8ceb" stroke-width="1"/>
<circle cx="265.5" cy="427.5" r="3.7" fill="#fff" stroke="#2d8ceb" stroke-width="1"/>
<circle cx="489.5" cy="427.5" r="3.7" fill="#fff" stroke="#2d8ceb" stroke-width="1"/>
<circle cx="41.5" cy="456" r="3.7" fill="#fff" stroke="#2d8ceb" stroke-width="1"/>
<circle cx="489.5" cy="456" r="3.7" fill="#fff" stroke="#2d8ceb" stroke-width="1"/>
<circle cx="41.5" cy="484.5" r="3.7" fill="#fff" stroke="#2d8ceb" stroke-width="1"/>
<circle cx="265.5" cy="484.5" r="3.7" fill="#fff" stroke="#2d8ceb" stroke-width="1"/>
<circle cx="489.5" cy="484.5" r="3.7" fill="#fff" stroke="#2d8ceb" stroke-width="1"/>
</svg>
<div class="t" style="left:329px;top:767.5px;font-size:13.7px;font-weight:bold;color:#2d8ceb">00:00:34:00</div>
<div class="a" style="left:431px;top:766px;width:87px;height:17px;background:#1b1b1b;border:1px solid #2f2f2f;border-radius:2px"></div>
<div class="t" style="left:438px;top:769px;font-size:11px;color:#cfcfcf">50%</div>
<svg class="a" style="left:504px;top:772px" width="9" height="5"><path d="M.5 .5L4.5 4.5L8.5 .5" stroke="#bbb" fill="none"/></svg>
<div class="a" style="left:1481px;top:766px;width:70px;height:17px;background:#1b1b1b;border:1px solid #2f2f2f;border-radius:2px"></div>
<div class="t" style="left:1488px;top:768px;font-size:12.5px;letter-spacing:1px;color:#cfcfcf">完整</div>
<div class="vl" style="left:322px;top:797px;height:11px;background:#6a6a6a"></div>
<div class="vl" style="left:340px;top:803px;height:5px;background:#6a6a6a"></div>
<div class="vl" style="left:357px;top:803px;height:5px;background:#6a6a6a"></div>
<div class="vl" style="left:374px;top:803px;height:5px;background:#6a6a6a"></div>
<div class="vl" style="left:391px;top:803px;height:5px;background:#6a6a6a"></div>
<div class="vl" style="left:408px;top:803px;height:5px;background:#6a6a6a"></div>
<div class="vl" style="left:425px;top:803px;height:5px;background:#6a6a6a"></div>
<div class="vl" style="left:442px;top:803px;height:5px;background:#6a6a6a"></div>
<div class="vl" style="left:459px;top:803px;height:5px;background:#6a6a6a"></div>
<div class="vl" style="left:476px;top:803px;height:5px;background:#6a6a6a"></div>
<div class="vl" style="left:494px;top:797px;height:11px;background:#6a6a6a"></div>
<div class="vl" style="left:511px;top:803px;height:5px;background:#6a6a6a"></div>
<div class="vl" style="left:528px;top:803px;height:5px;background:#6a6a6a"></div>
<div class="vl" style="left:545px;top:803px;height:5px;background:#6a6a6a"></div>
<div class="vl" style="left:562px;top:803px;height:5px;background:#6a6a6a"></div>
<div class="vl" style="left:579px;top:803px;height:5px;background:#6a6a6a"></div>
<div class="vl" style="left:596px;top:803px;height:5px;background:#6a6a6a"></div>
<div class="vl" style="left:613px;top:803px;height:5px;background:#6a6a6a"></div>
<div class="vl" style="left:630px;top:803px;height:5px;background:#6a6a6a"></div>
<div class="vl" style="left:647px;top:803px;height:5px;background:#6a6a6a"></div>
<div class="vl" style="left:664px;top:797px;height:11px;background:#6a6a6a"></div>
<div class="vl" style="left:682px;top:803px;height:5px;background:#6a6a6a"></div>
<div class="vl" style="left:699px;top:803px;height:5px;background:#6a6a6a"></div>
<div class="vl" style="left:716px;top:803px;height:5px;background:#6a6a6a"></div>
<div class="vl" style="left:733px;top:803px;height:5px;background:#6a6a6a"></div>
<div class="vl" style="left:750px;top:803px;height:5px;background:#6a6a6a"></div>
<div class="vl" style="left:767px;top:803px;height:5px;background:#6a6a6a"></div>
<div class="vl" style="left:784px;top:803px;height:5px;background:#6a6a6a"></div>
<div class="vl" style="left:801px;top:803px;height:5px;background:#6a6a6a"></div>
<div class="vl" style="left:818px;top:803px;height:5px;background:#6a6a6a"></div>
<div class="vl" style="left:836px;top:797px;height:11px;background:#6a6a6a"></div>
<div class="vl" style="left:853px;top:803px;height:5px;background:#6a6a6a"></div>
<div class="vl" style="left:870px;top:803px;height:5px;background:#6a6a6a"></div>
<div class="vl" style="left:887px;top:803px;height:5px;background:#6a6a6a"></div>
<div class="vl" style="left:904px;top:803px;height:5px;background:#6a6a6a"></div>
<div class="vl" style="left:921px;top:803px;height:5px;background:#6a6a6a"></div>
<div class="vl" style="left:938px;top:803px;height:5px;background:#6a6a6a"></div>
<div class="vl" style="left:955px;top:803px;height:5px;background:#6a6a6a"></div>
<div class="vl" style="left:972px;top:803px;height:5px;background:#6a6a6a"></div>
<div class="vl" style="left:989px;top:803px;height:5px;background:#6a6a6a"></div>
<div class="vl" style="left:1006px;top:797px;height:11px;background:#6a6a6a"></div>
<div class="vl" style="left:1024px;top:803px;height:5px;background:#6a6a6a"></div>
<div class="vl" style="left:1041px;top:803px;height:5px;background:#6a6a6a"></div>
<div class="vl" style="left:1058px;top:803px;height:5px;background:#6a6a6a"></div>
<div class="vl" style="left:1075px;top:803px;height:5px;background:#6a6a6a"></div>
<div class="vl" style="left:1092px;top:803px;height:5px;background:#6a6a6a"></div>
<div class="vl" style="left:1109px;top:803px;height:5px;background:#6a6a6a"></div>
<div class="vl" style="left:1126px;top:803px;height:5px;background:#6a6a6a"></div>
<div class="vl" style="left:1143px;top:803px;height:5px;background:#6a6a6a"></div>
<div class="vl" style="left:1160px;top:803px;height:5px;background:#6a6a6a"></div>
<div class="vl" style="left:1178px;top:797px;height:11px;background:#6a6a6a"></div>
<div class="vl" style="left:1195px;top:803px;height:5px;background:#6a6a6a"></div>
<div class="vl" style="left:1212px;top:803px;height:5px;background:#6a6a6a"></div>
<div class="vl" style="left:1229px;top:803px;height:5px;background:#6a6a6a"></div>
<div class="vl" style="left:1246px;top:803px;height:5px;background:#6a6a6a"></div>
<div class="vl" style="left:1263px;top:803px;height:5px;background:#6a6a6a"></div>
<div class="vl" style="left:1280px;top:803px;height:5px;background:#6a6a6a"></div>
<div class="vl" style="left:1297px;top:803px;height:5px;background:#6a6a6a"></div>
<div class="vl" style="left:1314px;top:803px;height:5px;background:#6a6a6a"></div>
<div class="vl" style="left:1331px;top:803px;height:5px;background:#6a6a6a"></div>
<div class="vl" style="left:1348px;top:797px;height:11px;background:#6a6a6a"></div>
<div class="vl" style="left:1366px;top:803px;height:5px;background:#6a6a6a"></div>
<div class="vl" style="left:1383px;top:803px;height:5px;background:#6a6a6a"></div>
<div class="vl" style="left:1400px;top:803px;height:5px;background:#6a6a6a"></div>
<div class="vl" style="left:1417px;top:803px;height:5px;background:#6a6a6a"></div>
<div class="vl" style="left:1434px;top:803px;height:5px;background:#6a6a6a"></div>
<div class="vl" style="left:1451px;top:803px;height:5px;background:#6a6a6a"></div>
<div class="vl" style="left:1468px;top:803px;height:5px;background:#6a6a6a"></div>
<div class="vl" style="left:1485px;top:803px;height:5px;background:#6a6a6a"></div>
<div class="vl" style="left:1502px;top:803px;height:5px;background:#6a6a6a"></div>
<div class="vl" style="left:1520px;top:797px;height:11px;background:#6a6a6a"></div>
<div class="vl" style="left:1537px;top:803px;height:5px;background:#6a6a6a"></div>
<div class="a" style="left:322px;top:809px;width:1222px;height:11px;background:#2f2f2f"></div>
<div class="a" style="left:324px;top:809px;width:10px;height:10px;border:2px solid #a0a0a0;border-radius:50%"></div>
<svg class="a" style="left:1480px;top:795px" width="11" height="13"><path d="M0 0H11V8L5.5 13L0 8Z" fill="#2d8ceb"/><path d="M5.5 7V12" stroke="#111" stroke-width="1"/></svg>
<svg class="a" style="left:822px;top:834px" width="10" height="10" viewBox="0 0 10 10"><path d="M0 0H10V6.5L5 10L0 6.5Z" fill="#a9a9a9"/></svg>
<svg class="a" style="left:861px;top:833px" width="5" height="11" viewBox="0 0 5 11"><path d="M4 0.5H2.5V4.5L0.8 5.5L2.5 6.5V10.5H4" stroke="#a9a9a9" stroke-width="1.6" fill="none"/></svg>
<svg class="a" style="left:893px;top:833px" width="5" height="11" viewBox="0 0 5 11"><g transform="translate(5 0) scale(-1 1)"><path d="M4 0.5H2.5V4.5L0.8 5.5L2.5 6.5V10.5H4" stroke="#a9a9a9" stroke-width="1.6" fill="none"/></g></svg>
<svg class="a" style="left:933px;top:833px" width="16" height="11" viewBox="0 0 16 11"><path d="M4 0.5H2.5V4.5L0.8 5.5L2.5 6.5V10.5H4" stroke="#a9a9a9" stroke-width="1.6" fill="none"/><path d="M5 5.5L9.5 1.5V4H15.5V7H9.5V9.5Z" fill="#a9a9a9"/></svg>
<svg class="a" style="left:968px;top:834px" width="13" height="10" viewBox="0 0 13 10"><path d="M0 5L8 0V10Z" fill="#a9a9a9"/><rect x="10" y="0" width="2.5" height="10" fill="#a9a9a9"/></svg>
<svg class="a" style="left:1004px;top:833px" width="13" height="11" viewBox="0 0 13 11"><path d="M0 0L12.5 5.5L0 11Z" fill="#a9a9a9"/></svg>
<svg class="a" style="left:1040px;top:834px" width="13" height="10" viewBox="0 0 13 10"><rect x="0" y="0" width="2.5" height="10" fill="#a9a9a9"/><path d="M4.5 0L12.5 5L4.5 10Z" fill="#a9a9a9"/></svg>
<svg class="a" style="left:1072px;top:833px" width="16" height="11" viewBox="0 0 16 11"><path d="M0 4H6V1.5L10.5 5.5L6 9.5V7H0Z" fill="#a9a9a9"/><path d="M12 0.5H13.5V4.5L15.2 5.5L13.5 6.5V10.5H12" stroke="#a9a9a9" stroke-width="1.6" fill="none"/></svg>
<svg class="a" style="left:1113px;top:832px" width="19" height="12" viewBox="0 0 19 12"><rect x="0" y="5" width="7" height="7" fill="#a9a9a9"/><rect x="12" y="5" width="7" height="7" fill="#a9a9a9"/><rect x="4.4" y="-1" width="10.2" height="9.4" fill="#232323"/><rect x="5.6" y="0.6" width="7.8" height="6.6" stroke="#a9a9a9" stroke-width="1.2" fill="none"/><path d="M7.4 5.1L9.5 2.5L11.6 5.1Z" fill="#a9a9a9"/></svg>
<svg class="a" style="left:1148px;top:832px" width="19" height="12" viewBox="0 0 19 12"><rect x="0.6" y="5.6" width="5.8" height="5.8" stroke="#a9a9a9" stroke-width="1.2" fill="none"/><rect x="12.6" y="5.6" width="5.8" height="5.8" stroke="#a9a9a9" stroke-width="1.2" fill="none"/><path d="M1.6 6.4L4.6 8.5L1.6 10.6Z" fill="#a9a9a9"/><path d="M17.4 6.4L14.4 8.5L17.4 10.6Z" fill="#a9a9a9"/><rect x="4.4" y="-1" width="10.2" height="9.4" fill="#232323"/><rect x="5.6" y="0.6" width="7.8" height="6.6" stroke="#a9a9a9" stroke-width="1.2" fill="none"/><path d="M7.4 5.1L9.5 2.5L11.6 5.1Z" fill="#a9a9a9"/></svg>
<svg class="a" style="left:1186px;top:833px" width="14" height="11" viewBox="0 0 14 11"><path d="M0 1.8H3.8L4.6 0.2H9.4L10.2 1.8H14V11H0Z" fill="#a9a9a9"/><circle cx="7" cy="6.2" r="2.7" stroke="#232323" stroke-width="0.9" fill="#a9a9a9"/></svg>
<svg class="a" style="left:1218px;top:831px" width="19" height="15" viewBox="0 0 19 15"><rect x="8.2" y="6.2" width="10.8" height="8.8" fill="#a9a9a9"/><rect x="10.8" y="7.4" width="5.6" height="6.2" fill="#232323"/><rect x="9.3" y="8.2" width="1" height="1" fill="#232323"/><rect x="17.2" y="8.2" width="1" height="1" fill="#232323"/><rect x="9.3" y="10.2" width="1" height="1" fill="#232323"/><rect x="17.2" y="10.2" width="1" height="1" fill="#232323"/><rect x="9.3" y="12.2" width="1" height="1" fill="#232323"/><rect x="17.2" y="12.2" width="1" height="1" fill="#232323"/><rect x="9.3" y="14.2" width="1" height="1" fill="#232323"/><rect x="17.2" y="14.2" width="1" height="1" fill="#232323"/><rect x="-0.5" y="-0.5" width="12" height="10" fill="#232323"/><rect x="0" y="0" width="11" height="9" rx="0.6" fill="#a9a9a9"/><rect x="1" y="1" width="1" height="1" fill="#232323"/><rect x="9.1" y="1" width="1" height="1" fill="#232323"/><rect x="1" y="3" width="1" height="1" fill="#232323"/><rect x="9.1" y="3" width="1" height="1" fill="#232323"/><rect x="1" y="5" width="1" height="1" fill="#232323"/><rect x="9.1" y="5" width="1" height="1" fill="#232323"/><rect x="1" y="7" width="1" height="1" fill="#232323"/><rect x="9.1" y="7" width="1" height="1" fill="#232323"/></svg>
<div class="a" style="left:0;top:863px;width:4px;height:401px;background:#232323"></div>
<div class="a" style="left:8px;top:863px;width:61px;height:401px;background:#232323"></div>
<div class="a" style="left:73px;top:863px;width:1459px;height:401px;background:#232323"></div>
<div class="a" style="left:1536px;top:863px;width:8px;height:401px;background:#232323"></div>
<div class="a" style="left:19px;top:880px;width:27px;height:25px;background:#181818;border:1px solid #333;border-radius:3px"></div>
<svg class="a" style="left:27px;top:884px" width="13" height="18" viewBox="0 0 13 18"><path d="M0 0L12.5 11H5.5L0 17.5Z" fill="#2d8ceb"/></svg>
<svg class="a" style="left:23px;top:913px" width="18" height="11" viewBox="0 0 18 11"><rect x="0.7" y="0.7" width="9" height="9.6" stroke="#b4b4b4" stroke-width="1.4" fill="none" stroke-dasharray="2.2 1.6"/><path d="M6 4H11.5V1L17.5 5.5L11.5 10V7H6Z" fill="#b4b4b4"/></svg>
<svg class="a" style="left:41px;top:927px" width="4" height="4" viewBox="0 0 4 4"><path d="M4 0V4H0Z" fill="#8a8a8a"/></svg>
<svg class="a" style="left:22px;top:938px" width="20" height="15" viewBox="0 0 20 15"><rect x="9" y="0" width="2" height="15" fill="#b4b4b4"/><path d="M0 7.5L7 3V12Z" fill="#b4b4b4"/><path d="M20 7.5L13 3V12Z" fill="#b4b4b4"/><rect x="6" y="6.8" width="8" height="1.6" fill="#b4b4b4"/></svg>
<svg class="a" style="left:41px;top:954px" width="4" height="4" viewBox="0 0 4 4"><path d="M4 0V4H0Z" fill="#8a8a8a"/></svg>
<svg class="a" style="left:23.5px;top:965px" width="17" height="17" viewBox="0 0 17 17"><path d="M0.9 6.3L6.7 0.8L16.4 10.5L10 16Z" fill="#b4b4b4" stroke="#b4b4b4" stroke-width="0.8" stroke-linejoin="round"/><path d="M5.2 5.6L11.2 11.6" stroke="#232323" stroke-width="1.1"/><circle cx="5.2" cy="5.6" r="1" fill="#232323"/><circle cx="8.2" cy="8.6" r="1" fill="#232323"/><circle cx="11.2" cy="11.6" r="1" fill="#232323"/></svg>
<svg class="a" style="left:22px;top:993px" width="21" height="14" viewBox="0 0 21 14"><rect x="0" y="0" width="2" height="14" fill="#b4b4b4"/><rect x="18.5" y="0" width="2" height="14" fill="#b4b4b4"/><path d="M3.5 7L7.5 4V10Z" fill="#b4b4b4"/><path d="M17 7L13 4V10Z" fill="#b4b4b4"/><rect x="6" y="6.3" width="8.5" height="1.4" fill="#b4b4b4"/></svg>
<svg class="a" style="left:41px;top:1008px" width="4" height="4" viewBox="0 0 4 4"><path d="M4 0V4H0Z" fill="#8a8a8a"/></svg>
<svg class="a" style="left:23.5px;top:1019px" width="17" height="17" viewBox="0 0 17 17"><path d="M10.3 1.8L12.3 -0.2Q13 -0.8 13.7 -0.1L16.6 2.8Q17.3 3.5 16.6 4.2L14.6 6.2Z" fill="#b4b4b4"/><path d="M9.4 2.9L13.6 7.1L12.7 11.3Q12.4 12.4 11.3 12.8L1.2 16.3Q0.4 16.5 0.7 15.7L4.6 5.2Q5 4 6 3.7Z" fill="#b4b4b4"/><path d="M1.1 15.9L6.6 10.4" stroke="#232323" stroke-width="1"/><circle cx="7.2" cy="9.8" r="1" fill="#232323"/></svg>
<svg class="a" style="left:24px;top:1047px" width="17" height="15" viewBox="0 0 17 15"><rect x="0.75" y="0.75" width="15" height="13" stroke="#b4b4b4" stroke-width="1.5" fill="#454545"/></svg>
<svg class="a" style="left:41px;top:1062px" width="4" height="4" viewBox="0 0 4 4"><path d="M4 0V4H0Z" fill="#8a8a8a"/></svg>
<svg class="a" style="left:24px;top:1072px" width="16" height="17" viewBox="0 0 16 17"><path d="M4 16Q1 12 0.5 8.5Q0.3 7 1.6 7Q2.8 7 3.5 9V2.5Q3.5 1.3 4.6 1.3Q5.7 1.3 5.7 2.5V7.5V1.3Q5.7 0 6.9 0Q8.1 0 8.1 1.3V7.5V2Q8.1 0.8 9.3 0.8Q10.5 0.8 10.5 2V8V3.6Q10.5 2.6 11.6 2.6Q12.7 2.6 12.7 3.8V10Q12.7 14 10.8 16Z" fill="#b4b4b4"/></svg>
<svg class="a" style="left:41px;top:1089px" width="4" height="4" viewBox="0 0 4 4"><path d="M4 0V4H0Z" fill="#8a8a8a"/></svg>
<svg class="a" style="left:24px;top:1101px" width="16" height="15" viewBox="0 0 16 15"><path d="M0.5 0H15.5V4.5H14.3Q14 2 12 1.8H9.2V13.2L11.2 13.6V15H4.8V13.6L6.8 13.2V1.8H4Q2 2 1.7 4.5H0.5Z" fill="#b4b4b4"/></svg>
<svg class="a" style="left:41px;top:1116px" width="4" height="4" viewBox="0 0 4 4"><path d="M4 0V4H0Z" fill="#8a8a8a"/></svg>
<svg class="a" style="left:84px;top:875px" width="6" height="6" viewBox="0 0 6 6"><path d="M0.5 0.5L5.5 5.5M5.5 0.5L0.5 5.5" stroke="#9a9a9a" stroke-width="1.1"/></svg>
<div class="t" style="left:101px;top:870px;font-size:12px;color:#cacaca">序列 01</div>
<svg class="a" style="left:155px;top:874px" width="9" height="8" viewBox="0 0 9 8"><path d="M0 .6H9M0 4H9M0 7.4H9" stroke="#c0c0c0" stroke-width="1.1"/></svg>
<div class="t" style="left:91px;top:896px;font-size:16px;font-weight:bold;color:#2d8ceb;letter-spacing:-0.1px">00:00:34:00</div>
<svg class="a" style="left:95px;top:919px" width="15" height="14" viewBox="0 0 15 14"><path d="M7.3 1V12.5" stroke="#2d8ceb" stroke-width="1.3"/><rect x="6.3" y="0" width="2.2" height="1.8" fill="#2d8ceb"/><path d="M0.8 2L13.8 12.5" stroke="#2d8ceb" stroke-width="1.1"/><rect x="0.2" y="7.3" width="3.8" height="1.4" fill="#2d8ceb"/><rect x="9.2" y="4" width="3.9" height="1.4" fill="#2d8ceb"/><rect x="3.4" y="10.5" width="5.8" height="1.4" fill="#2d8ceb"/><rect x="10" y="10.3" width="4.4" height="1.4" fill="#2d8ceb"/></svg>
<svg class="a" style="left:130px;top:919px" width="12" height="14" viewBox="0 0 12 14"><path d="M2 14V6Q2 2.2 6 2.2Q10 2.2 10 6V14" stroke="#2d8ceb" stroke-width="3.2" fill="none"/><path d="M0.4 11.5H3.6M8.4 11.5H11.6" stroke="#1a5590" stroke-width="3"/></svg>
<svg class="a" style="left:163px;top:920px" width="15" height="14" viewBox="0 0 15 14"><rect x="0" y="0" width="4" height="4.8" fill="#2d8ceb"/><path d="M4 6.7H0.6V10.4H4" stroke="#2d8ceb" stroke-width="1.2" fill="none"/><path d="M6.9 0H14V4.8H11.5Z" fill="#2d8ceb"/><path d="M5.35 0.9L13.97 9.4H9.27L5.44 13.1Z" fill="#2d8ceb"/></svg>
<svg class="a" style="left:200.5px;top:921.8px" width="8" height="10" viewBox="0 0 8 10"><path d="M0 0H7.5V6.2L3.75 9.3L0 6.2Z" fill="#b0b0b0"/></svg>
<svg class="a" style="left:231px;top:918px" width="15" height="16" viewBox="0 0 15 16"><path d="M5.5 6.5L13.3 14.3" stroke="#b0b0b0" stroke-width="2.6" stroke-linecap="round"/><path d="M1 2.2L3 4.2L4.8 2.4L2.8 0.4Q5.6 -0.2 6.9 2Q7.8 3.8 6.8 5.6L5.8 7.4L3.6 5.6Q1.6 5.9 0.8 4.8Q0.3 3.6 1 2.2Z" fill="#b0b0b0"/></svg>
<svg class="a" style="left:264px;top:921px" width="16" height="11" viewBox="0 0 16 11"><rect x="0.7" y="0.7" width="14.6" height="9.6" rx="2" stroke="#4a4a4a" stroke-width="1.4" fill="none"/><path d="M7 3.5Q6 2.8 5 2.8Q3 2.8 3 5.5Q3 8.2 5 8.2Q6 8.2 7 7.5M12.5 3.5Q11.5 2.8 10.5 2.8Q8.5 2.8 8.5 5.5Q8.5 8.2 10.5 8.2Q11.5 8.2 12.5 7.5" stroke="#4a4a4a" stroke-width="1.6" fill="none"/></svg>
<div class="vl" style="left:329px;top:928px;height:6px;background:#6a6a6a"></div>
<div class="vl" style="left:356px;top:928px;height:6px;background:#6a6a6a"></div>
<div class="vl" style="left:383px;top:928px;height:6px;background:#6a6a6a"></div>
<div class="vl" style="left:410px;top:928px;height:6px;background:#6a6a6a"></div>
<div class="vl" style="left:437px;top:928px;height:6px;background:#6a6a6a"></div>
<div class="vl" style="left:464px;top:928px;height:6px;background:#6a6a6a"></div>
<div class="vl" style="left:491px;top:928px;height:6px;background:#6a6a6a"></div>
<div class="vl" style="left:518px;top:928px;height:6px;background:#6a6a6a"></div>
<div class="vl" style="left:544px;top:922px;height:12px;background:#6a6a6a"></div>
<div class="vl" style="left:571px;top:928px;height:6px;background:#6a6a6a"></div>
<div class="vl" style="left:598px;top:928px;height:6px;background:#6a6a6a"></div>
<div class="vl" style="left:625px;top:928px;height:6px;background:#6a6a6a"></div>
<div class="vl" style="left:652px;top:928px;height:6px;background:#6a6a6a"></div>
<div class="vl" style="left:679px;top:928px;height:6px;background:#6a6a6a"></div>
<div class="vl" style="left:706px;top:928px;height:6px;background:#6a6a6a"></div>
<div class="vl" style="left:733px;top:928px;height:6px;background:#6a6a6a"></div>
<div class="vl" style="left:760px;top:928px;height:6px;background:#6a6a6a"></div>
<div class="vl" style="left:786px;top:928px;height:6px;background:#6a6a6a"></div>
<div class="vl" style="left:813px;top:922px;height:12px;background:#6a6a6a"></div>
<div class="vl" style="left:840px;top:928px;height:6px;background:#6a6a6a"></div>
<div class="vl" style="left:867px;top:928px;height:6px;background:#6a6a6a"></div>
<div class="vl" style="left:894px;top:928px;height:6px;background:#6a6a6a"></div>
<div class="vl" style="left:921px;top:928px;height:6px;background:#6a6a6a"></div>
<div class="vl" style="left:948px;top:928px;height:6px;background:#6a6a6a"></div>
<div class="vl" style="left:975px;top:928px;height:6px;background:#6a6a6a"></div>
<div class="vl" style="left:1002px;top:928px;height:6px;background:#6a6a6a"></div>
<div class="vl" style="left:1029px;top:928px;height:6px;background:#6a6a6a"></div>
<div class="vl" style="left:1056px;top:928px;height:6px;background:#6a6a6a"></div>
<div class="vl" style="left:1082px;top:922px;height:12px;background:#6a6a6a"></div>
<div class="vl" style="left:1109px;top:928px;height:6px;background:#6a6a6a"></div>
<div class="vl" style="left:1136px;top:928px;height:6px;background:#6a6a6a"></div>
<div class="vl" style="left:1163px;top:928px;height:6px;background:#6a6a6a"></div>
<div class="vl" style="left:1190px;top:928px;height:6px;background:#6a6a6a"></div>
<div class="vl" style="left:1217px;top:928px;height:6px;background:#6a6a6a"></div>
<div class="vl" style="left:1244px;top:928px;height:6px;background:#6a6a6a"></div>
<div class="vl" style="left:1271px;top:928px;height:6px;background:#6a6a6a"></div>
<div class="vl" style="left:1298px;top:928px;height:6px;background:#6a6a6a"></div>
<div class="vl" style="left:1324px;top:928px;height:6px;background:#6a6a6a"></div>
<div class="vl" style="left:1351px;top:922px;height:12px;background:#6a6a6a"></div>
<div class="vl" style="left:1378px;top:928px;height:6px;background:#6a6a6a"></div>
<div class="vl" style="left:1405px;top:928px;height:6px;background:#6a6a6a"></div>
<div class="vl" style="left:1432px;top:928px;height:6px;background:#6a6a6a"></div>
<div class="vl" style="left:1459px;top:928px;height:6px;background:#6a6a6a"></div>
<div class="vl" style="left:1486px;top:928px;height:6px;background:#6a6a6a"></div>
<div class="t" style="left:516.9px;top:909px;width:55px;text-align:center;font-size:11px;color:#ababab">00:00:25:00</div>
<div class="t" style="left:785.9px;top:909px;width:55px;text-align:center;font-size:11px;color:#ababab">00:00:30:00</div>
<div class="t" style="left:1054.9px;top:909px;width:55px;text-align:center;font-size:11px;color:#ababab">00:00:35:00</div>
<div class="t" style="left:1323.9px;top:909px;width:55px;text-align:center;font-size:11px;color:#ababab">00:00:40:00</div>
<div class="vl" style="left:1072px;top:892px;height:42px;background:#6a6a6a"></div>
<div class="a" style="left:310px;top:934px;width:1043px;height:2px;background:#f2e300"></div>
<div class="a" style="left:310px;top:936px;width:1199px;height:328px;background:#222"></div>
<div class="a" style="left:310px;top:1030px;width:1199px;height:234px;background:#202020"></div>
<div class="a" style="left:73px;top:1030px;width:236px;height:178px;background:#262626"></div>
<div class="hl" style="left:73px;top:1029px;width:1436px;background:#323232"></div>
<div class="hl" style="left:73px;top:1054px;width:1436px;background:#323232"></div>
<div class="hl" style="left:73px;top:1079px;width:1436px;background:#323232"></div>
<div class="hl" style="left:73px;top:1133px;width:1436px;background:#323232"></div>
<div class="hl" style="left:73px;top:1158px;width:1436px;background:#323232"></div>
<div class="hl" style="left:73px;top:1183px;width:1436px;background:#323232"></div>
<div class="hl" style="left:73px;top:1208px;width:1436px;background:#323232"></div>
<div class="a" style="left:73px;top:1104px;width:1436px;height:5px;background:#333"></div>
<div class="vl" style="left:309px;top:936px;height:328px;background:#333"></div>
<div class="t" style="left:138px;top:1038px;width:32px;text-align:center;font-size:10px;letter-spacing:-0.4px;color:#b4b4b4">V3</div>
<svg class="a" style="left:124px;top:1036px" width="9" height="10" viewBox="0 0 9 10"><path d="M1.8 4.5V2.8Q1.8 0.6 4.2 0.6Q6.4 0.6 6.6 2.4" stroke="#b4b4b4" stroke-width="1.4" fill="none"/><rect x="0" y="4.5" width="8.5" height="5.5" fill="#b4b4b4"/><rect x="3.6" y="6" width="1.4" height="2.5" fill="#232323"/></svg>
<svg class="a" style="left:178px;top:1037px" width="13" height="10" viewBox="0 0 13 10"><rect x="0.6" y="0.6" width="8" height="3.6" stroke="#b4b4b4" stroke-width="1.2" fill="none"/><rect x="0.6" y="5.6" width="8" height="3.6" stroke="#b4b4b4" stroke-width="1.2" fill="none"/><path d="M8.6 2.4H12.2V7.4H8.6" stroke="#b4b4b4" stroke-width="1.2" fill="none"/></svg>
<svg class="a" style="left:204px;top:1038px" width="14" height="9" viewBox="0 0 14 9"><path d="M0.3 4.5Q7 -2.5 13.7 4.5Q7 11.5 0.3 4.5Z" fill="#b4b4b4"/><circle cx="7" cy="4.5" r="2.6" fill="#262626"/><circle cx="7" cy="4.5" r="1.3" fill="#b4b4b4"/></svg>
<div class="t" style="left:138px;top:1063px;width:32px;text-align:center;font-size:10px;letter-spacing:-0.4px;color:#b4b4b4">V2</div>
<svg class="a" style="left:124px;top:1061px" width="9" height="10" viewBox="0 0 9 10"><path d="M1.8 4.5V2.8Q1.8 0.6 4.2 0.6Q6.4 0.6 6.6 2.4" stroke="#b4b4b4" stroke-width="1.4" fill="none"/><rect x="0" y="4.5" width="8.5" height="5.5" fill="#b4b4b4"/><rect x="3.6" y="6" width="1.4" height="2.5" fill="#232323"/></svg>
<svg class="a" style="left:178px;top:1062px" width="13" height="10" viewBox="0 0 13 10"><rect x="0.6" y="0.6" width="8" height="3.6" stroke="#b4b4b4" stroke-width="1.2" fill="none"/><rect x="0.6" y="5.6" width="8" height="3.6" stroke="#b4b4b4" stroke-width="1.2" fill="none"/><path d="M8.6 2.4H12.2V7.4H8.6" stroke="#b4b4b4" stroke-width="1.2" fill="none"/></svg>
<svg class="a" style="left:204px;top:1063px" width="14" height="9" viewBox="0 0 14 9"><path d="M0.3 4.5Q7 -2.5 13.7 4.5Q7 11.5 0.3 4.5Z" fill="#b4b4b4"/><circle cx="7" cy="4.5" r="2.6" fill="#262626"/><circle cx="7" cy="4.5" r="1.3" fill="#b4b4b4"/></svg>
<div class="a" style="left:86px;top:1080px;width:32px;height:24px;background:#0b5489"></div>
<div class="t" style="left:86px;top:1088px;width:32px;text-align:center;font-size:10px;letter-spacing:-0.4px;color:#c8d8e8">V1</div>
<div class="a" style="left:138px;top:1080px;width:32px;height:24px;background:#0b5489"></div>
<div class="t" style="left:138px;top:1088px;width:32px;text-align:center;font-size:10px;letter-spacing:-0.4px;color:#c8d8e8">V1</div>
<svg class="a" style="left:124px;top:1086px" width="9" height="10" viewBox="0 0 9 10"><path d="M1.8 4.5V2.8Q1.8 0.6 4.2 0.6Q6.4 0.6 6.6 2.4" stroke="#b4b4b4" stroke-width="1.4" fill="none"/><rect x="0" y="4.5" width="8.5" height="5.5" fill="#b4b4b4"/><rect x="3.6" y="6" width="1.4" height="2.5" fill="#232323"/></svg>
<svg class="a" style="left:178px;top:1087px" width="13" height="10" viewBox="0 0 13 10"><rect x="0.6" y="0.6" width="8" height="3.6" stroke="#b4b4b4" stroke-width="1.2" fill="none"/><rect x="0.6" y="5.6" width="8" height="3.6" stroke="#b4b4b4" stroke-width="1.2" fill="none"/><path d="M8.6 2.4H12.2V7.4H8.6" stroke="#b4b4b4" stroke-width="1.2" fill="none"/></svg>
<svg class="a" style="left:204px;top:1088px" width="14" height="9" viewBox="0 0 14 9"><path d="M0.3 4.5Q7 -2.5 13.7 4.5Q7 11.5 0.3 4.5Z" fill="#b4b4b4"/><circle cx="7" cy="4.5" r="2.6" fill="#262626"/><circle cx="7" cy="4.5" r="1.3" fill="#b4b4b4"/></svg>
<div class="a" style="left:86px;top:1109px;width:32px;height:24px;background:#0b5489"></div>
<div class="t" style="left:86px;top:1117px;width:32px;text-align:center;font-size:10px;letter-spacing:-0.4px;color:#c8d8e8">A1</div>
<div class="a" style="left:138px;top:1109px;width:32px;height:24px;background:#0b5489"></div>
<div class="t" style="left:138px;top:1117px;width:32px;text-align:center;font-size:10px;letter-spacing:-0.4px;color:#c8d8e8">A1</div>
<svg class="a" style="left:124px;top:1115px" width="9" height="10" viewBox="0 0 9 10"><path d="M1.8 4.5V2.8Q1.8 0.6 4.2 0.6Q6.4 0.6 6.6 2.4" stroke="#b4b4b4" stroke-width="1.4" fill="none"/><rect x="0" y="4.5" width="8.5" height="5.5" fill="#b4b4b4"/><rect x="3.6" y="6" width="1.4" height="2.5" fill="#232323"/></svg>
<svg class="a" style="left:178px;top:1116px" width="13" height="10" viewBox="0 0 13 10"><rect x="0.6" y="0.6" width="8" height="3.6" stroke="#b4b4b4" stroke-width="1.2" fill="none"/><rect x="0.6" y="5.6" width="8" height="3.6" stroke="#b4b4b4" stroke-width="1.2" fill="none"/><path d="M8.6 2.4H12.2V7.4H8.6" stroke="#b4b4b4" stroke-width="1.2" fill="none"/></svg>
<div class="t" style="left:206px;top:1116px;font-size:11px;color:#b4b4b4">M</div>
<div class="t" style="left:234px;top:1116px;font-size:11px;color:#b4b4b4">S</div>
<svg class="a" style="left:260px;top:1114px" width="10" height="14" viewBox="0 0 10 14"><rect x="2.8" y="0" width="4.4" height="9" rx="2.2" fill="#b4b4b4"/><path d="M1 6.5Q1 10.3 5 10.3Q9 10.3 9 6.5" stroke="#b4b4b4" stroke-width="1.1" fill="none"/><path d="M5 10.3V13M2.5 13.3H7.5" stroke="#b4b4b4" stroke-width="1.1"/></svg>
<div class="a" style="left:138px;top:1134px;width:32px;height:24px;background:#0b5489"></div>
<div class="t" style="left:138px;top:1142px;width:32px;text-align:center;font-size:10px;letter-spacing:-0.4px;color:#c8d8e8">A2</div>
<svg class="a" style="left:124px;top:1140px" width="9" height="10" viewBox="0 0 9 10"><path d="M1.8 4.5V2.8Q1.8 0.6 4.2 0.6Q6.4 0.6 6.6 2.4" stroke="#b4b4b4" stroke-width="1.4" fill="none"/><rect x="0" y="4.5" width="8.5" height="5.5" fill="#b4b4b4"/><rect x="3.6" y="6" width="1.4" height="2.5" fill="#232323"/></svg>
<svg class="a" style="left:178px;top:1141px" width="13" height="10" viewBox="0 0 13 10"><rect x="0.6" y="0.6" width="8" height="3.6" stroke="#b4b4b4" stroke-width="1.2" fill="none"/><rect x="0.6" y="5.6" width="8" height="3.6" stroke="#b4b4b4" stroke-width="1.2" fill="none"/><path d="M8.6 2.4H12.2V7.4H8.6" stroke="#b4b4b4" stroke-width="1.2" fill="none"/></svg>
<div class="t" style="left:206px;top:1141px;font-size:11px;color:#b4b4b4">M</div>
<div class="t" style="left:234px;top:1141px;font-size:11px;color:#b4b4b4">S</div>
<svg class="a" style="left:260px;top:1139px" width="10" height="14" viewBox="0 0 10 14"><rect x="2.8" y="0" width="4.4" height="9" rx="2.2" fill="#b4b4b4"/><path d="M1 6.5Q1 10.3 5 10.3Q9 10.3 9 6.5" stroke="#b4b4b4" stroke-width="1.1" fill="none"/><path d="M5 10.3V13M2.5 13.3H7.5" stroke="#b4b4b4" stroke-width="1.1"/></svg>
<div class="a" style="left:138px;top:1159px;width:32px;height:24px;background:#0b5489"></div>
<div class="t" style="left:138px;top:1167px;width:32px;text-align:center;font-size:10px;letter-spacing:-0.4px;color:#c8d8e8">A3</div>
<svg class="a" style="left:124px;top:1165px" width="9" height="10" viewBox="0 0 9 10"><path d="M1.8 4.5V2.8Q1.8 0.6 4.2 0.6Q6.4 0.6 6.6 2.4" stroke="#b4b4b4" stroke-width="1.4" fill="none"/><rect x="0" y="4.5" width="8.5" height="5.5" fill="#b4b4b4"/><rect x="3.6" y="6" width="1.4" height="2.5" fill="#232323"/></svg>
<svg class="a" style="left:178px;top:1166px" width="13" height="10" viewBox="0 0 13 10"><rect x="0.6" y="0.6" width="8" height="3.6" stroke="#b4b4b4" stroke-width="1.2" fill="none"/><rect x="0.6" y="5.6" width="8" height="3.6" stroke="#b4b4b4" stroke-width="1.2" fill="none"/><path d="M8.6 2.4H12.2V7.4H8.6" stroke="#b4b4b4" stroke-width="1.2" fill="none"/></svg>
<div class="t" style="left:206px;top:1166px;font-size:11px;color:#b4b4b4">M</div>
<div class="t" style="left:234px;top:1166px;font-size:11px;color:#b4b4b4">S</div>
<svg class="a" style="left:260px;top:1164px" width="10" height="14" viewBox="0 0 10 14"><rect x="2.8" y="0" width="4.4" height="9" rx="2.2" fill="#b4b4b4"/><path d="M1 6.5Q1 10.3 5 10.3Q9 10.3 9 6.5" stroke="#b4b4b4" stroke-width="1.1" fill="none"/><path d="M5 10.3V13M2.5 13.3H7.5" stroke="#b4b4b4" stroke-width="1.1"/></svg>
<svg class="a" style="left:124px;top:1190px" width="9" height="10" viewBox="0 0 9 10"><path d="M1.8 4.5V2.8Q1.8 0.6 4.2 0.6Q6.4 0.6 6.6 2.4" stroke="#b4b4b4" stroke-width="1.4" fill="none"/><rect x="0" y="4.5" width="8.5" height="5.5" fill="#b4b4b4"/><rect x="3.6" y="6" width="1.4" height="2.5" fill="#232323"/></svg>
<div class="t" style="left:141px;top:1188px;font-size:12px;color:#a8a8a8">混合</div>
<div class="t" style="left:218px;top:1190px;font-size:11px;color:#2d8ceb">0.0</div>
<svg class="a" style="left:290px;top:1187px" width="12" height="10" viewBox="0 0 12 10"><path d="M0 0L5 5L0 10ZM12 0L7 5L12 10Z" fill="#b0b0b0"/><rect x="0" y="0" width="1.6" height="10" fill="#b0b0b0"/><rect x="10.4" y="0" width="1.6" height="10" fill="#b0b0b0"/></svg>
<div class="a" style="left:310px;top:1080px;width:1043px;height:24px;background:#739bcf"></div>
<svg class="a" style="left:1349px;top:1080px" width="4" height="4" viewBox="0 0 4 4"><path d="M0 0H4V4Z" fill="#e8e8e8"/></svg>
<div class="a" style="left:1219px;top:1083px;width:11px;height:10px;background:#f0c000"></div>
<div class="t" style="left:1220px;top:1083px;font-size:10px;font-style:italic;color:#5a4a00;font-family:'Liberation Serif'">fx</div>
<div class="t" style="left:1239px;top:1083px;font-size:10px;color:#111">样5片 4K无水印版.mp4</div>
<div class="a" style="left:1029px;top:1055px;width:268px;height:24px;background:#dcdcdc"></div>
<div class="a" style="left:1033px;top:1059px;width:260px;height:16px;background:#e483e2"></div>
<div class="a" style="left:1039px;top:1058px;width:12px;height:11px;background:#a77fe2;border:1px solid #9a9a9a"></div>
<div class="t" style="left:1040px;top:1058px;font-size:10px;font-style:italic;color:#4a3a7a;font-family:'Liberation Serif'">fx</div>
<div class="t" style="left:1058px;top:1059px;font-size:9.5px;color:#111">guangchuangkejijiaoyu</div>
<div class="a" style="left:310px;top:1109px;width:1043px;height:24px;background:#3a4e68"></div>
<svg class="a" style="left:1349px;top:1109px" width="4" height="4" viewBox="0 0 4 4"><path d="M0 0H4V4Z" fill="#e8e8e8"/></svg>
<svg class="a" style="left:310px;top:1109px" width="1043" height="24" viewBox="0 0 1043 24"><path d="M0 12 L0 11.0 L3 11.0 L6 10.0 L9 11.0 L12 11.0 L15 10.5 L18 11.0 L21 10.0 L24 10.0 L27 11.0 L30 11.0 L33 10.0 L36 11.0 L39 11.0 L42 11.0 L45 11.0 L48 10.0 L51 10.0 L54 10.0 L57 10.0 L60 10.5 L63 11.0 L66 10.0 L69 10.5 L72 10.0 L75 10.5 L78 10.0 L81 10.5 L84 10.0 L87 11.0 L90 11.0 L93 10.5 L96 9.5 L99 11.0 L102 10.0 L105 10.0 L108 11.0 L111 8.5 L114 8.5 L117 9.5 L120 9.0 L123 11.0 L126 9.0 L129 11.0 L132 11.0 L135 9.5 L138 10.0 L141 10.0 L144 10.0 L147 11.0 L150 11.0 L153 9.0 L156 10.0 L159 11.0 L162 9.5 L165 10.5 L168 9.0 L171 9.0 L174 11.0 L177 10.0 L180 10.0 L183 9.0 L186 10.0 L189 9.5 L192 9.0 L195 9.5 L198 9.0 L201 10.5 L204 9.5 L207 9.5 L210 9.5 L213 10.0 L216 8.5 L219 11.0 L222 11.0 L225 10.0 L228 8.5 L231 9.5 L234 9.5 L237 9.5 L240 10.0 L243 9.0 L246 11.0 L249 10.5 L252 10.0 L255 10.0 L258 9.5 L261 9.0 L264 11.0 L267 9.5 L270 11.0 L273 11.0 L276 10.5 L279 11.0 L282 10.0 L285 11.0 L288 11.0 L291 11.0 L294 11.0 L297 10.5 L300 11.0 L303 10.5 L306 11.0 L309 10.5 L312 10.5 L315 10.5 L318 10.0 L321 10.0 L324 10.0 L327 10.0 L330 11.0 L333 10.0 L336 10.0 L339 11.0 L342 10.0 L345 10.5 L348 10.5 L351 11.0 L354 10.5 L357 11.0 L360 11.0 L363 10.0 L366 11.0 L369 8.5 L372 11.0 L375 10.0 L378 11.0 L381 9.0 L384 11.0 L387 10.5 L390 8.5 L393 9.5 L396 10.0 L399 11.0 L402 10.0 L405 10.5 L408 8.5 L411 9.0 L414 10.0 L417 10.0 L420 9.0 L423 8.5 L426 11.0 L429 10.5 L432 11.0 L435 11.0 L438 11.0 L441 11.0 L444 8.5 L447 10.5 L450 11.0 L453 9.0 L456 9.0 L459 10.0 L462 10.0 L465 9.5 L468 11.0 L471 11.0 L474 9.0 L477 10.5 L480 9.5 L483 9.0 L486 11.0 L489 9.0 L492 9.5 L495 8.5 L498 9.5 L501 9.0 L504 11.0 L507 10.0 L510 10.0 L513 11.0 L516 10.0 L519 10.5 L522 9.5 L525 10.0 L528 8.5 L531 11.0 L534 9.0 L537 11.0 L540 10.5 L543 11.0 L546 11.0 L549 11.0 L552 10.0 L555 11.0 L558 11.0 L561 10.0 L564 11.0 L567 11.0 L570 11.0 L573 10.0 L576 10.5 L579 10.5 L582 11.0 L585 11.0 L588 11.0 L591 11.0 L594 10.5 L597 11.0 L600 11.0 L603 11.0 L606 10.0 L609 10.5 L612 10.0 L615 10.0 L618 10.0 L621 11.0 L624 11.0 L627 10.0 L630 9.0 L633 10.5 L636 8.5 L639 8.5 L642 8.5 L645 10.5 L648 10.0 L651 10.5 L654 9.5 L657 10.0 L660 9.0 L663 10.0 L666 10.0 L669 10.0 L672 9.0 L675 10.5 L678 9.5 L681 9.5 L684 10.5 L687 8.5 L690 10.0 L693 11.0 L696 11.0 L699 11.0 L702 10.0 L705 11.0 L708 10.0 L711 10.0 L714 10.5 L717 11.0 L720 10.5 L723 9.5 L726 9.0 L729 11.0 L732 11.0 L735 10.0 L738 9.5 L741 9.5 L744 11.0 L747 9.5 L750 9.0 L753 11.0 L756 8.5 L759 10.5 L762 9.5 L765 10.0 L768 9.0 L771 8.5 L774 10.0 L777 9.5 L780 9.5 L783 10.0 L786 10.0 L789 9.5 L792 11.0 L795 8.5 L798 9.5 L801 10.0 L804 10.5 L807 10.5 L810 10.5 L813 10.0 L816 11.0 L819 11.0 L822 10.0 L825 10.5 L828 11.0 L831 10.0 L834 11.0 L837 11.0 L840 11.0 L843 10.0 L846 11.0 L849 10.5 L852 11.0 L855 11.0 L858 10.5 L861 10.5 L864 10.0 L867 11.0 L870 10.0 L873 11.0 L876 11.0 L879 11.0 L882 11.0 L885 11.0 L888 10.0 L891 10.0 L894 11.0 L897 11.0 L900 10.0 L903 10.5 L906 10.5 L909 10.0 L912 10.0 L915 8.5 L918 9.0 L921 10.0 L924 8.5 L927 10.0 L930 8.5 L933 10.0 L936 11.0 L939 10.0 L942 10.5 L945 8.5 L948 10.0 L951 10.0 L954 8.5 L957 10.0 L960 10.5 L963 8.5 L966 11.0 L969 9.5 L972 10.0 L975 11.0 L978 11.0 L981 9.5 L984 9.5 L987 10.5 L990 11.0 L993 11.0 L996 9.5 L999 11.0 L1002 9.0 L1005 10.0 L1008 9.5 L1011 11.0 L1014 11.0 L1017 10.5 L1020 8.5 L1023 11.0 L1026 9.0 L1029 8.5 L1032 11.0 L1035 8.5 L1038 9.0 L1041 10.5 L1043 12Z" fill="#739bcf"/><path d="M0 24 L0 22.0 L3 22.5 L6 22.0 L9 22.0 L12 22.5 L15 22.0 L18 23.0 L21 22.0 L24 22.5 L27 23.0 L30 22.0 L33 22.0 L36 22.0 L39 23.0 L42 22.5 L45 22.5 L48 22.0 L51 22.0 L54 22.5 L57 23.0 L60 23.0 L63 23.0 L66 23.0 L69 22.0 L72 22.0 L75 22.5 L78 22.0 L81 21.5 L84 21.5 L87 22.5 L90 22.5 L93 21.0 L96 21.5 L99 21.0 L102 21.0 L105 22.5 L108 23.0 L111 21.0 L114 23.0 L117 23.0 L120 23.0 L123 22.5 L126 22.0 L129 23.0 L132 22.0 L135 21.5 L138 21.5 L141 23.0 L144 23.0 L147 23.0 L150 23.0 L153 22.5 L156 23.0 L159 22.5 L162 22.5 L165 22.5 L168 22.5 L171 22.0 L174 22.0 L177 22.5 L180 22.5 L183 22.5 L186 22.0 L189 23.0 L192 22.0 L195 23.0 L198 22.0 L201 23.0 L204 22.5 L207 22.0 L210 22.0 L213 22.0 L216 23.0 L219 22.0 L222 22.5 L225 22.0 L228 22.5 L231 23.0 L234 23.0 L237 22.5 L240 22.5 L243 23.0 L246 21.5 L249 22.5 L252 21.0 L255 23.0 L258 23.0 L261 21.0 L264 23.0 L267 22.5 L270 22.0 L273 23.0 L276 21.0 L279 21.5 L282 22.5 L285 23.0 L288 21.5 L291 22.5 L294 22.5 L297 21.0 L300 21.5 L303 21.5 L306 22.0 L309 21.5 L312 22.0 L315 21.0 L318 22.5 L321 22.0 L324 23.0 L327 23.0 L330 23.0 L333 22.0 L336 22.0 L339 23.0 L342 22.0 L345 22.0 L348 23.0 L351 22.0 L354 23.0 L357 23.0 L360 22.0 L363 22.5 L366 23.0 L369 22.0 L372 23.0 L375 23.0 L378 22.0 L381 23.0 L384 22.5 L387 22.5 L390 23.0 L393 23.0 L396 23.0 L399 23.0 L402 22.5 L405 23.0 L408 21.0 L411 23.0 L414 23.0 L417 21.5 L420 23.0 L423 22.5 L426 23.0 L429 23.0 L432 23.0 L435 22.0 L438 21.0 L441 21.5 L444 22.5 L447 22.5 L450 22.5 L453 21.0 L456 21.5 L459 22.5 L462 23.0 L465 22.0 L468 23.0 L471 21.0 L474 23.0 L477 23.0 L480 22.5 L483 22.0 L486 22.0 L489 23.0 L492 22.0 L495 22.0 L498 22.5 L501 22.5 L504 23.0 L507 22.0 L510 22.0 L513 22.5 L516 22.5 L519 23.0 L522 22.5 L525 23.0 L528 22.0 L531 22.0 L534 22.0 L537 22.0 L540 22.0 L543 22.0 L546 22.5 L549 23.0 L552 23.0 L555 22.0 L558 22.0 L561 23.0 L564 22.5 L567 23.0 L570 21.0 L573 21.0 L576 21.5 L579 23.0 L582 21.5 L585 23.0 L588 21.5 L591 21.5 L594 21.5 L597 23.0 L600 23.0 L603 22.0 L606 22.5 L609 21.5 L612 22.5 L615 23.0 L618 21.5 L621 22.0 L624 22.0 L627 23.0 L630 23.0 L633 23.0 L636 21.0 L639 21.0 L642 22.0 L645 23.0 L648 23.0 L651 22.0 L654 23.0 L657 22.0 L660 22.0 L663 23.0 L666 23.0 L669 22.5 L672 23.0 L675 22.0 L678 23.0 L681 22.5 L684 22.5 L687 22.0 L690 22.5 L693 22.5 L696 22.5 L699 22.5 L702 23.0 L705 23.0 L708 23.0 L711 22.5 L714 23.0 L717 22.5 L720 23.0 L723 23.0 L726 23.0 L729 23.0 L732 22.5 L735 23.0 L738 22.0 L741 23.0 L744 22.5 L747 22.0 L750 22.0 L753 23.0 L756 22.0 L759 21.5 L762 23.0 L765 23.0 L768 23.0 L771 21.5 L774 23.0 L777 21.0 L780 22.0 L783 21.0 L786 23.0 L789 21.0 L792 21.0 L795 21.5 L798 23.0 L801 22.0 L804 22.0 L807 23.0 L810 22.0 L813 23.0 L816 22.0 L819 22.5 L822 22.0 L825 22.0 L828 22.5 L831 22.5 L834 22.0 L837 23.0 L840 22.0 L843 22.5 L846 22.5 L849 22.5 L852 23.0 L855 22.5 L858 23.0 L861 22.5 L864 22.5 L867 22.5 L870 23.0 L873 22.5 L876 22.0 L879 22.0 L882 23.0 L885 21.5 L888 21.0 L891 21.0 L894 21.5 L897 22.0 L900 21.5 L903 21.5 L906 23.0 L909 22.5 L912 23.0 L915 22.0 L918 22.5 L921 21.0 L924 21.5 L927 21.0 L930 23.0 L933 21.0 L936 23.0 L939 22.0 L942 21.5 L945 23.0 L948 21.5 L951 23.0 L954 23.0 L957 21.0 L960 23.0 L963 23.0 L966 23.0 L969 22.0 L972 22.0 L975 22.5 L978 22.5 L981 22.5 L984 22.0 L987 23.0 L990 22.0 L993 22.0 L996 23.0 L999 23.0 L1002 22.0 L1005 22.5 L1008 23.0 L1011 22.5 L1014 23.0 L1017 22.5 L1020 22.5 L1023 22.0 L1026 23.0 L1029 22.5 L1032 22.5 L1035 22.0 L1038 22.5 L1041 22.0 L1043 24Z" fill="#739bcf"/></svg>
<div class="vl" style="left:1028px;top:926px;height:338px;background:#2d8ceb"></div>
<svg class="a" style="left:1023px;top:921px" width="11" height="13" viewBox="0 0 11 13"><path d="M0 0H11V8L5.5 13L0 8Z" fill="#2d8ceb"/></svg>
<div class="a" style="left:1509px;top:936px;width:10px;height:328px;background:#2c2c2c"></div>
<div class="a" style="left:1509px;top:941px;width:10px;height:10px;border:2px solid #a0a0a0;border-radius:50%;background:#2c2c2c"></div>
<div class="a" style="left:1509px;top:1093px;width:10px;height:10px;border:2px solid #a0a0a0;border-radius:50%;background:#2c2c2c"></div>
<div class="a" style="left:1509px;top:1109px;width:10px;height:10px;border:2px solid #a0a0a0;border-radius:50%;background:#2c2c2c"></div>
<div class="a" style="left:1509px;top:1104px;width:10px;height:5px;background:#333"></div>
</body></html>
